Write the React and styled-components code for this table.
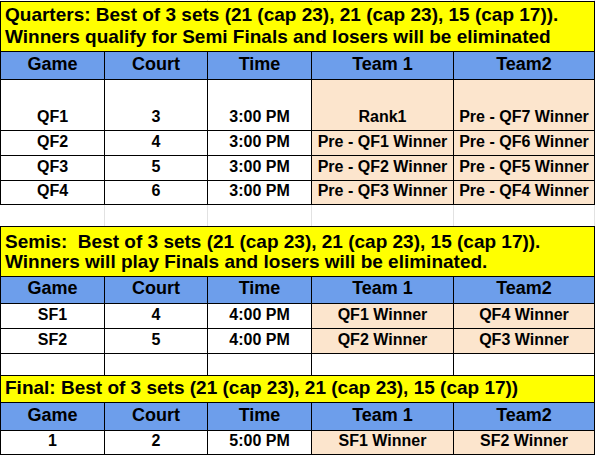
import React from "react";
import styled, { createGlobalStyle } from "styled-components";

const GlobalStyle = createGlobalStyle`
  html, body {
    margin: 0;
    padding: 0;
    background: #ffffff;
  }
  body {
    font-family: "Liberation Sans", Arial, sans-serif;
    color: #000000;
  }
`;

const COLS = "104px 103px 104px 142px 141px";

// Whole sheet
const Sheet = styled.div`
  width: 599px;
  height: 457px;
  display: flex;
  flex-direction: column;
  overflow: hidden;
`;

// Light spreadsheet gridlines strip (empty cells)
const GridGap = styled.div`
  display: grid;
  grid-template-columns: 105px 103px 104px 142px 141px;
  width: 595px;
  height: ${({ $h }) => $h}px;
`;

const GapCell = styled.div`
  border-right: 1px solid #e2e2e2;
`;

// A bordered table block
const Block = styled.div`
  display: flex;
  flex-direction: column;
  width: 595px;
  box-sizing: border-box;
  border-top: 1px solid #000;
  border-left: 1px solid #000;
`;

// Yellow title banner
const Title = styled.div`
  box-sizing: border-box;
  height: ${({ $h }) => $h}px;
  background: #ffff00;
  border-right: 1px solid #000;
  border-bottom: 1px solid #000;
  display: flex;
  flex-direction: column;
  justify-content: flex-end;
  padding: 0 0 ${({ $pb }) => $pb}px 4px;
  font-size: 19px;
  font-weight: bold;
  line-height: ${({ $lh }) => $lh}px;
  white-space: pre;
`;

// Row of five cells
const Row = styled.div`
  display: grid;
  grid-template-columns: ${COLS};
  height: ${({ $h }) => $h}px;
  box-sizing: border-box;
  border-bottom: 1px solid #000;
`;

const Cell = styled.div`
  box-sizing: border-box;
  border-right: 1px solid #000;
  display: flex;
  align-items: flex-end;
  justify-content: center;
  padding-bottom: 4px;
  font-size: ${({ $head }) => ($head ? 18 : 16)}px;
  font-weight: bold;
  line-height: ${({ $head }) => ($head ? 21 : 18)}px;
  white-space: nowrap;
  background: ${({ $bg }) => $bg || "#ffffff"};
`;

const HEADERS = ["Game", "Court", "Time", "Team 1", "Team2"];
const BLUE = "#6d9eeb";
const PEACH = "#fce5cd";

const HeaderRow = ({ h }) => (
  <Row $h={h}>
    {HEADERS.map((t) => (
      <Cell key={t} $head $bg={BLUE}>
        {t}
      </Cell>
    ))}
  </Row>
);

const GameRow = ({ h, game }) => (
  <Row $h={h}>
    <Cell>{game[0]}</Cell>
    <Cell>{game[1]}</Cell>
    <Cell>{game[2]}</Cell>
    <Cell $bg={PEACH}>{game[3]}</Cell>
    <Cell $bg={PEACH}>{game[4]}</Cell>
  </Row>
);

const EmptyRow = ({ h }) => (
  <Row $h={h}>
    {HEADERS.map((t) => (
      <Cell key={t} />
    ))}
  </Row>
);

const LightGap = ({ h }) => (
  <GridGap $h={h}>
    {HEADERS.map((t) => (
      <GapCell key={t} />
    ))}
  </GridGap>
);

const quarters = [
  [51, ["QF1", "3", "3:00 PM", "Rank1", "Pre - QF7 Winner"]],
  [25, ["QF2", "4", "3:00 PM", "Pre - QF1 Winner", "Pre - QF6 Winner"]],
  [25, ["QF3", "5", "3:00 PM", "Pre - QF2 Winner", "Pre - QF5 Winner"]],
  [24, ["QF4", "6", "3:00 PM", "Pre - QF3 Winner", "Pre - QF4 Winner"]],
];

const semis = [
  [25, ["SF1", "4", "4:00 PM", "QF1 Winner", "QF4 Winner"]],
  [25, ["SF2", "5", "4:00 PM", "QF2 Winner", "QF3 Winner"]],
];

const App = () => {
  return (
    <>
      <GlobalStyle />
      <Sheet>
        <LightGap h={1} />

        <Block>
          <Title $h={50} $lh={22} $pb={3}>
            {"Quarters: Best of 3 sets (21 (cap 23), 21 (cap 23), 15 (cap 17)).\nWinners qualify for Semi Finals and losers will be eliminated"}
          </Title>
          <HeaderRow h={28} />
          {quarters.map(([h, g]) => (
            <GameRow key={g[0]} h={h} game={g} />
          ))}
        </Block>

        <LightGap h={21} />

        <Block>
          <Title $h={50} $lh={20} $pb={4}>
            {"Semis:  Best of 3 sets (21 (cap 23), 21 (cap 23), 15 (cap 17)).\nWinners will play Finals and losers will be eliminated."}
          </Title>
          <HeaderRow h={27} />
          {semis.map(([h, g]) => (
            <GameRow key={g[0]} h={h} game={g} />
          ))}
          <EmptyRow h={22} />
          <Title $h={27} $lh={20} $pb={4}>
            {"Final: Best of 3 sets (21 (cap 23), 21 (cap 23), 15 (cap 17))"}
          </Title>
          <HeaderRow h={28} />
          <GameRow h={24} game={["1", "2", "5:00 PM", "SF1 Winner", "SF2 Winner"]} />
        </Block>
      </Sheet>
    </>
  );
};

export default App;
